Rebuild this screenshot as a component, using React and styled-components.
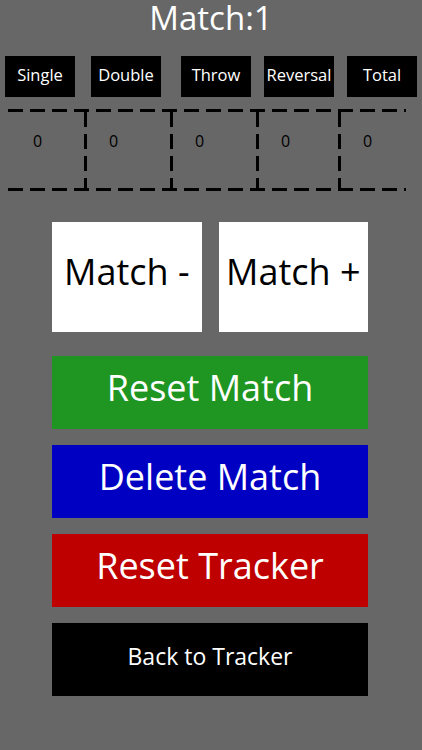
import React from "react";
import styled, { createGlobalStyle } from "styled-components";

const colors = {
  page: "#676767",
  ink: "#000",
  paper: "#fff",
  green: "#1f9522",
  blue: "#0000c2",
  red: "#bf0000"
};

const GlobalStyle = createGlobalStyle`
  html, body {
    margin: 0;
    padding: 0;
    background: ${colors.page};
  }
  body {
    font-family: "Open Sans", "Noto Sans", sans-serif;
  }
`;

const Screen = styled.div`
  width: 422px;
  height: 750px;
  background: ${colors.page};
  overflow: hidden;
`;

const Title = styled.h1`
  margin: 0;
  padding-top: 1px;
  height: 33px;

  font-size: 33px;
  line-height: 33px;
  font-weight: 400;
  text-align: center;

  color: ${colors.paper};
`;

const Labels = styled.div`
  display: flex;
  margin-top: 22px;
  padding-left: 5px;
`;

const Label = styled.div`
  display: flex;
  align-items: center;
  justify-content: center;
  box-sizing: border-box;

  width: 70px;
  height: 41px;
  margin-left: ${p => p.$gap}px;
  padding-bottom: 4px;

  background: ${colors.ink};
  color: ${colors.paper};
  font-size: 16.5px;
  white-space: nowrap;
`;

const dashX = `repeating-linear-gradient(90deg, ${colors.ink} 0 15px, transparent 15px 22px)`;
const dashY = `repeating-linear-gradient(180deg, ${colors.ink} 0 15px, transparent 15px 22px)`;

const Board = styled.div`
  display: flex;
  width: 398px;
  height: 82px;
  margin: 12px 0 0 8px;

  background-image: ${dashX}, ${dashX};
  background-position: left top, left bottom;
  background-size: 100% 3px, 100% 3px;
  background-repeat: no-repeat;
`;

const Cell = styled.div`
  box-sizing: border-box;
  width: ${p => p.$width}px;
  flex: ${p => (p.$last ? 1 : "none")};
  padding: 22px 0 0 25px;

  background-image: ${p => (p.$first ? "none" : dashY)};
  background-position: left 3px;
  background-size: 3px 100%;
  background-repeat: no-repeat;

  font-size: 16px;
  line-height: 20px;
  color: ${colors.ink};
`;

const Controls = styled.div`
  display: flex;
  flex-direction: column;
  gap: 16px;
  width: 316px;
  margin: 31px 0 0 52px;
`;

const StepRow = styled.div`
  display: flex;
  gap: 17px;
  margin-bottom: 8px;
`;

const StepButton = styled.button`
  display: flex;
  align-items: center;
  justify-content: center;
  flex: 1;
  height: 110px;
  padding: 0 0 12px;
  border: none;

  background: ${colors.paper};
  color: ${colors.ink};
  font-family: inherit;
  font-size: 36px;
`;

const ActionButton = styled.button`
  display: flex;
  align-items: center;
  justify-content: center;
  height: 73px;
  padding: 0 0 ${p => (p.$small ? 8 : 10)}px;
  border: none;

  background: ${p => p.$bg};
  color: ${colors.paper};
  font-family: inherit;
  font-size: ${p => (p.$small ? 23 : 36)}px;
`;

const labels = [
  { text: "Single", gap: 0 },
  { text: "Double", gap: 16 },
  { text: "Throw", gap: 20 },
  { text: "Reversal", gap: 13 },
  { text: "Total", gap: 13 }
];

const cellWidths = [76, 86, 86, 82, 68];

const actions = [
  { text: "Reset Match", bg: colors.green },
  { text: "Delete Match", bg: colors.blue },
  { text: "Reset Tracker", bg: colors.red },
  { text: "Back to Tracker", bg: colors.ink, small: true }
];

const App = () => (
  <Screen>
    <GlobalStyle />
    <Title>Match:1</Title>

    <Labels>
      {labels.map(l => (
        <Label key={l.text} $gap={l.gap}>
          {l.text}
        </Label>
      ))}
    </Labels>

    <Board>
      {cellWidths.map((w, i) => (
        <Cell
          key={i}
          $width={w}
          $first={i === 0}
          $last={i === cellWidths.length - 1}
        >
          0
        </Cell>
      ))}
    </Board>

    <Controls>
      <StepRow>
        <StepButton>Match -</StepButton>
        <StepButton>Match +</StepButton>
      </StepRow>
      {actions.map(a => (
        <ActionButton key={a.text} $bg={a.bg} $small={a.small}>
          {a.text}
        </ActionButton>
      ))}
    </Controls>
  </Screen>
);

export default App;
